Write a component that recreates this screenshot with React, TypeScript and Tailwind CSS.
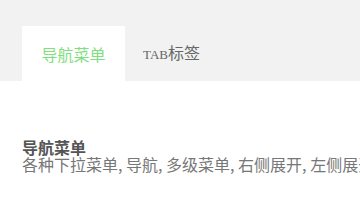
import * as React from 'react';

const tabs = [
  { key: 'nav', label: '导航菜单' },
  { key: 'tab', label: 'TAB标签' },
];

export default function App() {
  const [active, setActive] = React.useState('nav');

  return (
    <div className="w-[360px] h-[200px] overflow-hidden bg-white font-['Noto_Sans_CJK_SC',sans-serif]">
      {/* Tab bar */}
      <div className="bg-[#f2f2f2] h-[81px] pt-[26px] pl-[22px] flex">
        {tabs.map((t) => {
          const on = active === t.key;
          return (
            <button
              key={t.key}
              onClick={() => setActive(t.key)}
              className={
                on
                  ? 'h-[55px] w-[103px] flex items-center justify-center bg-white text-[16px] text-[#80e080]'
                  : 'h-[55px] px-[18px] flex items-center justify-center text-[16px] text-[#666]'
              }
            >
              {t.key === 'tab' ? (
                <span className="leading-[20px]">
                  <span className="font-['Liberation_Serif',serif] text-[13px]">TAB</span>
                  标签
                </span>
              ) : (
                <span className="leading-[20px]">{t.label}</span>
              )}
            </button>
          );
        })}
      </div>

      {/* Content */}
      <div className="pt-[58px] pl-[22px]">
        <div className="text-[16px] leading-[17px] font-bold text-[#555]">导航菜单</div>
        <div className="text-[16px] leading-[17px] text-[#777] whitespace-nowrap">
          各种下拉菜单, 导航, 多级菜单, 右侧展开, 左侧展开
        </div>
      </div>
    </div>
  );
}
